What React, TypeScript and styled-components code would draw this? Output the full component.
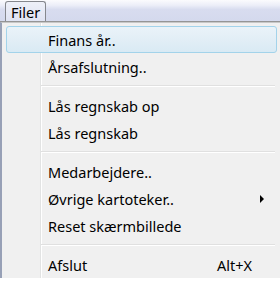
import React from "react";
import styled, { createGlobalStyle } from "styled-components";

const Global = createGlobalStyle`
  html, body { margin: 0; padding: 0; background: #ffffff; }
  body { width: 280px; height: 283px; overflow: hidden; font-family: "Noto Sans", "Open Sans", sans-serif; }
`;

const Page = styled.div`
  width: 280px;
  height: 283px;
  overflow: hidden;
  display: flex;
  flex-direction: column;
`;

const MenuBar = styled.div`
  height: 22px;
  box-sizing: border-box;
  display: flex;
  align-items: flex-end;
  padding-left: 5px;
  background: linear-gradient(to bottom, #fbfbfd 0%, #eceef8 25%, #d8dcef 45%, #d4d9ed 100%);
  border-bottom: 1px solid #959595;
`;

const MenuTitle = styled.div`
  height: 20px;
  box-sizing: border-box;
  padding: 0 5px 0 5px;
  display: flex;
  align-items: center;
  font-size: 14.5px;
  color: #000;
  border: 1px solid #85878d;
  border-bottom: none;
  border-radius: 3px 3px 0 0;
  background: linear-gradient(to bottom, #eef0f8 0%, #dfe3f2 100%);
`;

const Dropdown = styled.div`
  width: 280px;
  height: 256px;
  box-sizing: border-box;
  border-left: 2px solid #97a0b6;
  border-top: 1px solid #c8c8c8;
  padding: 3px 3px 0 4px;
  background: linear-gradient(
    to right,
    #f0f0f0 0,
    #f0f0f0 38px,
    #e2e3e3 38px,
    #e2e3e3 39px,
    #ffffff 39px,
    #ffffff 40px,
    #f0f0f0 40px
  );
  display: flex;
  flex-direction: column;
`;

const Item = styled.div<{ $active?: boolean }>`
  height: 27px;
  box-sizing: border-box;
  display: flex;
  align-items: center;
  padding: 0 24px 0 41px;
  font-size: 14.5px;
  color: #000;
  border-radius: 3px;
  border: 1px solid ${(p) => (p.$active ? "#a3d3ea" : "transparent")};
  background: ${(p) =>
    p.$active
      ? "linear-gradient(to bottom, #eaf3f9 0%, #e2eef6 50%, #d9eaf4 100%)"
      : "transparent"};
`;

const Label = styled.span`
  flex: 1;
`;

const Shortcut = styled.span`
  font-size: 14.5px;
`;

const Arrow = styled.span`
  width: 0;
  height: 0;
  margin-right: -12px;
  border-top: 4px solid transparent;
  border-bottom: 4px solid transparent;
  border-left: 4px solid #000;
`;

const Separator = styled.div`
  height: 12px;
  display: flex;
  flex-direction: column;
  justify-content: center;
  padding-left: 35px;
  padding-right: 2px;
  &::before {
    content: "";
    display: block;
    height: 1px;
    background: #e0e0e0;
  }
  &::after {
    content: "";
    display: block;
    height: 1px;
    background: #ffffff;
  }
`;

export default function App() {
  return (
    <Page>
      <Global />
      <MenuBar>
        <MenuTitle>Filer</MenuTitle>
      </MenuBar>
      <Dropdown>
        <Item $active>
          <Label>Finans år..</Label>
        </Item>
        <Item>
          <Label>Årsafslutning..</Label>
        </Item>
        <Separator />
        <Item>
          <Label>Lås regnskab op</Label>
        </Item>
        <Item>
          <Label>Lås regnskab</Label>
        </Item>
        <Separator />
        <Item>
          <Label>Medarbejdere..</Label>
        </Item>
        <Item>
          <Label>Øvrige kartoteker..</Label>
          <Arrow />
        </Item>
        <Item>
          <Label>Reset skærmbillede</Label>
        </Item>
        <Separator />
        <Item>
          <Label>Afslut</Label>
          <Shortcut>Alt+X</Shortcut>
        </Item>
      </Dropdown>
    </Page>
  );
}
